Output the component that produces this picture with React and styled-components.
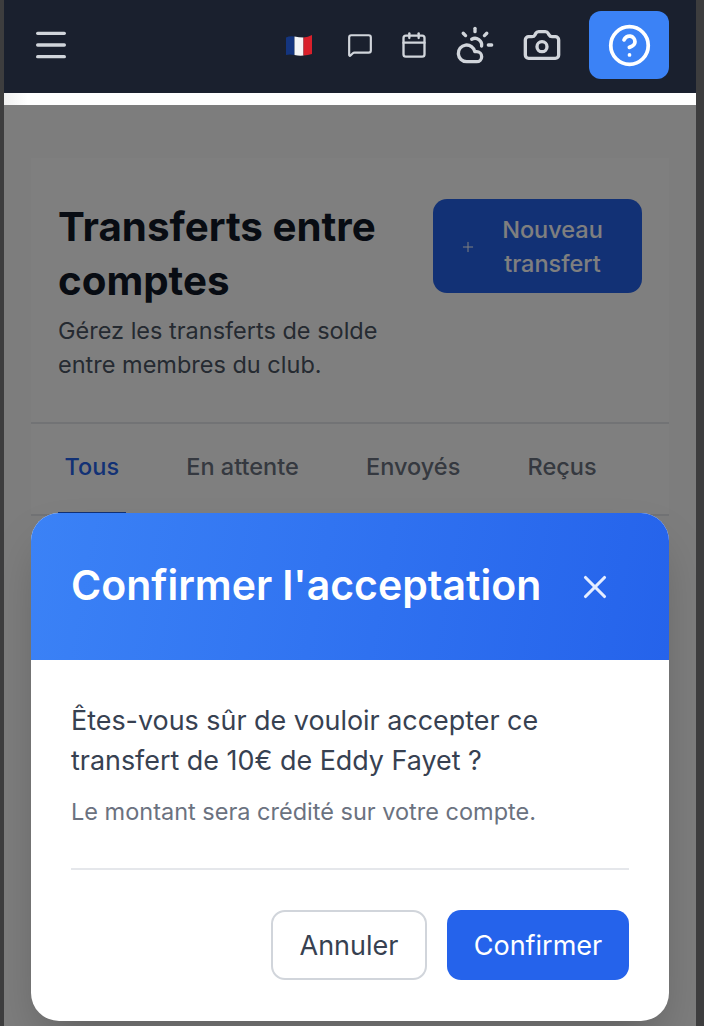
import React from 'react';
import styled, { createGlobalStyle } from 'styled-components';
import { Menu, MessageSquare, Calendar, CloudSun, Camera, CircleHelp, Plus, X } from 'lucide-react';

const GlobalStyle = createGlobalStyle`
    html, body {
        margin: 0;
        padding: 0;
        background: #3d3d3e;
    }
    * {
        box-sizing: border-box;
    }
    body {
        font-family: "Inter", "Liberation Sans", sans-serif;
    }
`;

const Frame = styled.div`
    width: 704px;
    height: 1026px;
    padding: 0 8px 0 4px;
    background: #3d3d3e;
    display: flex;
    flex-direction: column;
    overflow: hidden;
`;

const Header = styled.header`
    flex: none;
    height: 93px;
    padding: 0 27px 3px;
    background: #1a202e;
    display: flex;
    align-items: center;
    justify-content: space-between;
`;

const RightIcons = styled.div`
    display: flex;
    align-items: center;
    gap: 27px;
`;

const IconSlot = styled.span`
    display: flex;
    margin-right: ${p => p.$mr || 0}px;
    color: #d1d5db;
`;

const MenuButton = styled.span`
    display: flex;
    color: #d1d5db;
`;

const HelpButton = styled.span`
    width: 80px;
    height: 68px;
    border-radius: 12px;
    background: #3b82f6;
    color: #fff;
    display: flex;
    align-items: center;
    justify-content: center;
`;

const WhiteStrip = styled.div`
    flex: none;
    height: 12px;
    background: linear-gradient(90deg, #f0f0f0 0, #fff 24px);
`;

const Page = styled.main`
    flex: 1;
    position: relative;
    padding: 53px 27px 0;
    background: #fafafb;
    overflow: hidden;
`;

const Card = styled.section`
    background: #fff;
`;

const CardTop = styled.div`
    display: flex;
    justify-content: space-between;
    align-items: flex-start;
    padding: 41px 27px 40px;
    border-bottom: 2px solid #e5e7eb;
`;

const TitleBlock = styled.div`
    width: 345px;
`;

const Title = styled.h1`
    margin: 1px 0 6px;
    font-size: 40.3px;
    line-height: 54px;
    font-weight: 700;
    color: #111827;
`;

const Subtitle = styled.p`
    margin: 0;
    font-size: 23.5px;
    line-height: 34px;
    color: #4b5563;
`;

const NewButton = styled.button`
    width: 209px;
    height: 94px;
    padding: 2px 27px 0;
    border: 0;
    border-radius: 14px;
    background: #2563eb;
    color: #fff;
    font: 500 23.5px/34px "Inter", sans-serif;
    display: flex;
    align-items: center;
    gap: 14px;
`;

const NewLabel = styled.span`
    flex: 1;
    text-align: center;
`;

const Tabs = styled.nav`
    height: 92px;
    padding: 0 27px;
    display: flex;
    gap: 54px;
    border-bottom: 2px solid #e5e7eb;
`;

const Tab = styled.span`
    padding: 0 6.6px;
    font-size: 23.5px;
    font-weight: 500;
    line-height: 86px;
    color: ${p => (p.$active ? '#2563eb' : '#6b7280')};
    border-bottom: 4px solid ${p => (p.$active ? '#2563eb' : 'transparent')};
    height: 92px;
`;

const Overlay = styled.div`
    position: absolute;
    inset: 0;
    padding: 0 27px 5px;
    background: rgba(0, 0, 0, 0.5);
    display: flex;
    align-items: flex-end;
`;

const Modal = styled.div`
    width: 100%;
    height: 508px;
    border-radius: 28px;
    background: #fff;
    overflow: hidden;
    box-shadow: 0 25px 50px -12px rgba(0, 0, 0, 0.25);
`;

const ModalHeader = styled.div`
    height: 147px;
    padding: 0 55px 3px 40px;
    background: linear-gradient(100deg, #3b82f6, #2563eb);
    display: flex;
    align-items: center;
    justify-content: space-between;
    color: #fff;
`;

const ModalTitle = styled.h2`
    margin: 0;
    font-size: 41px;
    font-weight: 600;
    line-height: 56px;
`;

const CloseButton = styled.span`
    display: flex;
    margin-top: 3px;
    color: #e5edff;
`;

const ModalBody = styled.div`
    padding: 40px 40px 0;
`;

const Question = styled.p`
    margin: 0;
    font-size: 26.9px;
    line-height: 40px;
    color: #374151;
`;

const Note = styled.p`
    margin: 15px 0 0;
    font-size: 23.5px;
    line-height: 34px;
    color: #6b7280;
`;

const Divider = styled.hr`
    margin: 39px 0 40px;
    border: 0;
    border-top: 2px solid #e5e7eb;
`;

const Actions = styled.div`
    display: flex;
    justify-content: flex-end;
    gap: 20px;
`;

const ActionButton = styled.button`
    height: 70px;
    width: ${p => p.$w}px;
    border-radius: 14px;
    font: 400 27px "Inter", sans-serif;
    border: ${p => (p.$primary ? '0' : '2px solid #d1d5db')};
    background: ${p => (p.$primary ? '#2563eb' : '#fff')};
    color: ${p => (p.$primary ? '#fff' : '#374151')};
`;

// flag is a drawing with a slight wave, like the emoji in the picture
const Flag = () => (
    <svg width="28" height="22" viewBox="0 0 28 22" style={{ filter: 'blur(0.7px)' }}>
        <path d="M1 3.5 Q5 1.5 9.5 2.5 V21 Q5 20 1 21 Z" fill="#14357f" />
        <path d="M9.5 2.5 Q14 3.5 18.5 3.5 V21.5 Q14 22 9.5 21 Z" fill="#f4f5f7" />
        <path d="M18.5 3.5 Q23 3 27 1 V20 Q23 21 18.5 21.5 Z" fill="#d9202b" />
    </svg>
);

const App = () => {
    return (
        <Frame>
            <GlobalStyle />
            <Header>
                <MenuButton><Menu size={40} strokeWidth={2} /></MenuButton>
                <RightIcons>
                    <IconSlot $mr={7}><Flag /></IconSlot>
                    <IconSlot><MessageSquare size={26} strokeWidth={2} /></IconSlot>
                    <IconSlot><Calendar size={28} strokeWidth={2} /></IconSlot>
                    <IconSlot><CloudSun size={40} strokeWidth={2} /></IconSlot>
                    <IconSlot><Camera size={40} strokeWidth={2} /></IconSlot>
                    <HelpButton><CircleHelp size={45} strokeWidth={2} /></HelpButton>
                </RightIcons>
            </Header>
            <WhiteStrip />
            <Page>
                <Card>
                    <CardTop>
                        <TitleBlock>
                            <Title>Transferts entre comptes</Title>
                            <Subtitle>Gérez les transferts de solde entre membres du club.</Subtitle>
                        </TitleBlock>
                        <NewButton>
                            <Plus size={16} strokeWidth={1.5} />
                            <NewLabel>Nouveau transfert</NewLabel>
                        </NewButton>
                    </CardTop>
                    <Tabs>
                        <Tab $active>Tous</Tab>
                        <Tab>En attente</Tab>
                        <Tab>Envoyés</Tab>
                        <Tab>Reçus</Tab>
                    </Tabs>
                </Card>
                <Overlay>
                    <Modal>
                        <ModalHeader>
                            <ModalTitle>Confirmer l'acceptation</ModalTitle>
                            <CloseButton><X size={38} strokeWidth={2} /></CloseButton>
                        </ModalHeader>
                        <ModalBody>
                            <Question>Êtes-vous sûr de vouloir accepter ce transfert de 10€ de Eddy Fayet ?</Question>
                            <Note>Le montant sera crédité sur votre compte.</Note>
                            <Divider />
                            <Actions>
                                <ActionButton $w={156}>Annuler</ActionButton>
                                <ActionButton $w={182} $primary>Confirmer</ActionButton>
                            </Actions>
                        </ModalBody>
                    </Modal>
                </Overlay>
            </Page>
        </Frame>
    );
};

export default App;
